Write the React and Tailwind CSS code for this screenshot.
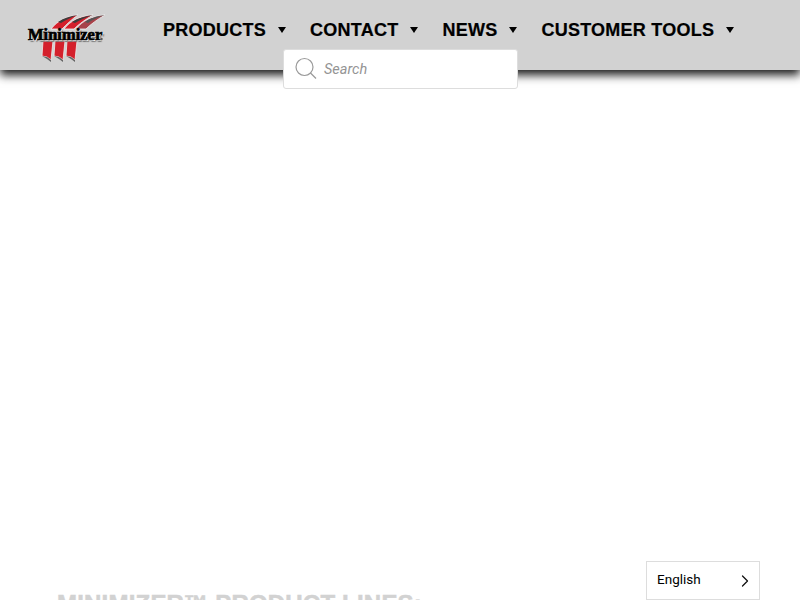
import React from 'react';
import { ChevronRight } from 'lucide-react';

const NAV = ['PRODUCTS', 'CONTACT', 'NEWS', 'CUSTOMER TOOLS'];

function Logo() {
  return (
    <div className="relative w-[80px] h-[50px]">
      <svg width="80" height="50" viewBox="0 0 80 50" className="absolute inset-0">
        {/* swooshes */}
        <g stroke="#f2f2f2" strokeWidth="0.8">
          <path d="M25 16 C31 8 41 3 52 2 C46 6 41 11 36 16 Z" fill="#d4202c" />
          <path d="M38 16 C44 8 54 3 67 2 C60 6 53 11 48 16 Z" fill="#d4202c" />
          <path d="M50 16 C56 8 66 3 79 2 C72 6 65 11 60 16 Z" fill="#a8434a" />
        </g>
        <path d="M32 9 C38 5 44 3 52 2 C45 4 40 7 35 10 Z" fill="#3d3d3d" />
        <path d="M46 9 C52 5 59 3 67 2 C60 4 54 7 49 10 Z" fill="#3d3d3d" />
        <path d="M59 9 C64 5 71 3 79 2 C72 4 66 7 62 10 Z" fill="#555555" />
        {/* lower blades */}
        <g stroke="#eeeeee" strokeWidth="0.8">
          <path d="M17 28 L27 28 L25 47 L21 44 L16 43 Z" fill="#d4202c" />
          <path d="M29 28 L39 28 L37 47 L33 44 L28 43 Z" fill="#d4202c" />
          <path d="M41 28 L51 28 L49 47 L45 44 L40 43 Z" fill="#d4202c" />
        </g>
        <path d="M16 43 L21 44 L25 47 L25 49 L21 46 Z" fill="#666" />
        <path d="M28 43 L33 44 L37 47 L37 49 L33 46 Z" fill="#666" />
        <path d="M40 43 L45 44 L49 47 L49 49 L45 46 Z" fill="#666" />
        <circle cx="75.5" cy="26" r="1.2" fill="#555" />
      </svg>
      <span className="absolute left-[2px] top-[13px] font-['Liberation_Serif',serif] font-bold text-[16.5px] leading-[18px] text-black [-webkit-text-stroke:0.7px_black] [text-shadow:1px_1px_0_#fff,2px_2px_1px_#777]">
        Minimizer
      </span>
    </div>
  );
}

export default function App() {
  return (
    <div className="relative w-[800px] h-[600px] overflow-hidden bg-white font-['Liberation_Sans',sans-serif]">
      {/* Header */}
      <header className="relative h-[70px] bg-[#d2d2d2] flex items-start shadow-[0_5px_9px_rgba(0,0,0,0.9)]">
        <div className="ml-[26px] mt-[13px] mr-[57px]">
          <Logo />
        </div>
        <nav className="flex items-center gap-[24px] h-[60px]">
          {NAV.map(label => (
            <a key={label} className="flex items-center text-[18px] font-bold leading-[20px] tracking-[0.25px] text-black [-webkit-text-stroke:0.2px_black]">
              {label}
              <span className="ml-[12px] w-0 h-0 border-x-[4px] border-x-transparent border-t-[6px] border-t-black" />
            </a>
          ))}
        </nav>
      </header>

      {/* Search */}
      <div className="absolute left-[283px] top-[49px] w-[235px] h-[40px] flex items-center bg-white border border-[#dddddd] rounded-[3px]">
        <svg width="24" height="24" viewBox="0 0 24 24" fill="none" stroke="#9a9a9a" strokeWidth="1.2" className="ml-[10px]">
          <circle cx="10.5" cy="10" r="8.5" />
          <path d="M16.5 16 L22 21.5" />
        </svg>
        <span className="ml-[6px] mt-[2px] font-['Roboto',sans-serif] italic text-[14.5px] text-[#949494]">Search</span>
      </div>

      {/* Page content */}
      <main className="pt-[520px] pl-[57px]">
        <h2 className="text-[24px] font-bold leading-[28px] tracking-[0.2px] text-[#d2d2d2] [-webkit-text-stroke:0.5px_#d2d2d2]">MINIMIZER™ PRODUCT LINES:</h2>
      </main>

      {/* Language picker */}
      <div className="absolute left-[646px] top-[561px] w-[114px] h-[39px] flex items-center justify-between bg-white border border-[#dddddd] pl-[10px] pr-[4px]">
        <span className="mb-[2px] font-['Roboto',sans-serif] text-[13.5px] text-black">English</span>
        <ChevronRight size={20} strokeWidth={1.5} color="#111" />
      </div>
    </div>
  );
}
